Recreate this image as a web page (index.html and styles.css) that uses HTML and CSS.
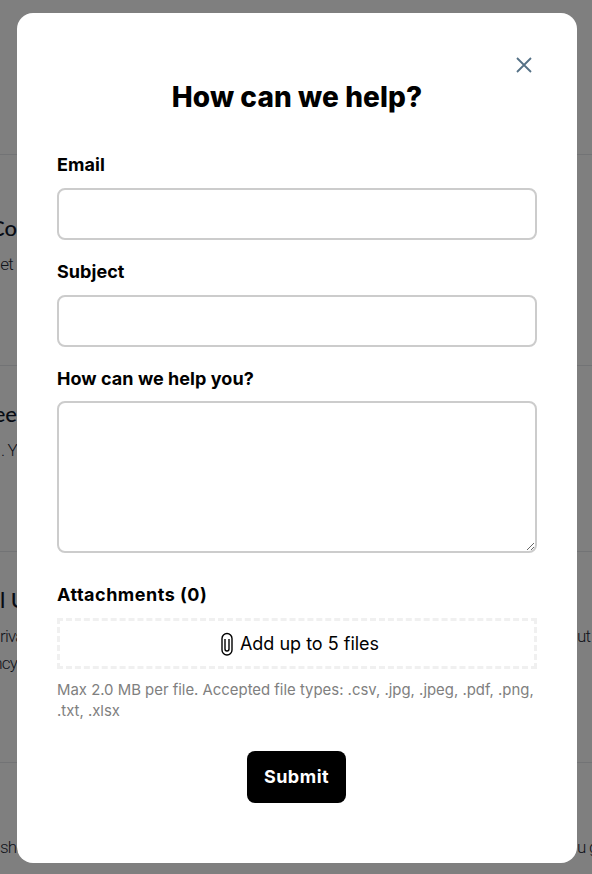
FILE: index.html
```html
<!DOCTYPE html>
<html lang="en">
<head>
<meta charset="utf-8">
<title>How can we help?</title>
<link rel="stylesheet" href="styles.css">
</head>
<body>
<div class="page">
  <section class="row row-a"></section>
  <section class="row row-b">
    <h2 class="row-title">Co</h2>
    <p class="row-text"><span class="inset">et</span></p>
  </section>
  <section class="row row-c">
    <h2 class="row-title">ee</h2>
    <p class="row-text"><span>. Y</span></p>
  </section>
  <section class="row row-d">
    <h2 class="row-title start">l U</h2>
    <p class="row-text"><span class="start">riva</span><span>ut</span></p>
    <p class="row-text"><span>ncy</span></p>
  </section>
  <section class="row row-e">
    <p class="row-text"><span class="start">she</span><span>u g</span></p>
  </section>
</div>
<div class="overlay"></div>
<main class="modal">
  <button class="close" type="button" aria-label="Close">
    <svg viewBox="0 0 16 16" width="16" height="16"><path d="M1 1L15 15M15 1L1 15"/></svg>
  </button>
  <h1 class="heading">How can we help?</h1>
  <form class="form">
    <label class="label label-first" for="email">Email</label>
    <input class="field" id="email" type="text">
    <label class="label" for="subject">Subject</label>
    <input class="field" id="subject" type="text">
    <label class="label label-help" for="help">How can we help you?</label>
    <textarea class="field area" id="help"></textarea>
    <div class="label label-attach">Attachments (0)</div>
    <div class="drop">
      <svg class="clip" viewBox="0 0 12 24" width="12" height="24"><path d="M11 18V6.5a5 5 0 0 0-10 0V18a5 5 0 0 0 10 0"/><path d="M4 7v10a2 2 0 0 0 4 0V7"/></svg>
      <span>Add up to 5 files</span>
    </div>
    <p class="hint">Max 2.0 MB per file. Accepted file types: .csv, .jpg, .jpeg, .pdf, .png, .txt, .xlsx</p>
    <div class="actions"><button class="submit" type="button">Submit</button></div>
  </form>
</main>
</body>
</html>
```
FILE: styles.css
```css
* { box-sizing: border-box; }
html, body { margin: 0; height: 874px; overflow: hidden; background: #fff; font-family: "Inter", "Liberation Sans", sans-serif; }
.page { height: 874px; overflow: hidden; color: #1f2937; }
.row { border-bottom: 1px solid #e5e7eb; }
.row-a { height: 155px; }
.row-b { height: 211px; padding-top: 58px; }
.row-c { height: 186px; padding-top: 33px; }
.row-d { height: 211px; padding-top: 33px; }
.row-e { padding-top: 74px; border-bottom: 0; }
.row-title { margin: 0 0 11px; font: 500 22px/30px "Lato", sans-serif; color: #0f172a; display: flex; justify-content: flex-end; width: 17px; white-space: nowrap; }
.row-title.start { justify-content: flex-start; }
.row-text { margin: 0 0 7px; font: 300 17px/20px "Roboto", sans-serif; letter-spacing: -.8px; color: #1f2937; display: flex; justify-content: space-between; }
.row-text span { width: 17px; display: flex; justify-content: flex-end; white-space: nowrap; }
.row-text span + span { width: 15px; justify-content: flex-start; }
.row-text .start { justify-content: flex-start; }
.row-text .inset { padding-right: 4px; }
.overlay { position: absolute; inset: 0; background: rgba(0, 0, 0, .5); }
.modal { position: absolute; left: 17px; top: 13px; width: 560px; height: 850px; padding: 0 40px; background: #fff; border-radius: 16px; color: #000; }
.close { position: absolute; top: 44px; right: 45px; width: 16px; height: 16px; padding: 0; border: 0; background: none; }
.close svg { display: block; fill: none; stroke: #557186; stroke-width: 1.8; }
.heading { margin: 0; padding-top: 65px; height: 108px; text-align: center; font-size: 28px; line-height: 38px; font-weight: 800; letter-spacing: .1px; }
.form { display: flex; flex-direction: column; }
.label { font-size: 18px; line-height: 24px; font-weight: 700; margin-top: 20px; margin-bottom: 11px; letter-spacing: .05px; }
.label-first { margin-top: 32px; }
.label-help { margin-bottom: 10px; }
.field { display: block; width: 100%; height: 52px; border: 2px solid #ccc; border-radius: 8px; background: #fff; outline: 0; font: inherit; }
.area { height: 152px; resize: vertical; }
.label-attach { margin-top: 30px; margin-bottom: 11px; letter-spacing: .5px; }
.drop { height: 51px; padding-left: 6px; border: 3px dashed #f0f0f0; display: flex; align-items: center; justify-content: center; gap: 7px; font-size: 18px; }
.clip { fill: none; stroke: #000; stroke-width: 1.4; }
.hint { margin: 11px 0 0; font-size: 14.9px; line-height: 21px; color: #808080; }
.actions { display: flex; justify-content: center; padding-right: 1px; margin-top: 29px; }
.submit { width: 99px; height: 52px; border: 0; border-radius: 8px; background: #000; color: #fff; font: 700 18px/24px "Inter", sans-serif; letter-spacing: .5px; }
```
